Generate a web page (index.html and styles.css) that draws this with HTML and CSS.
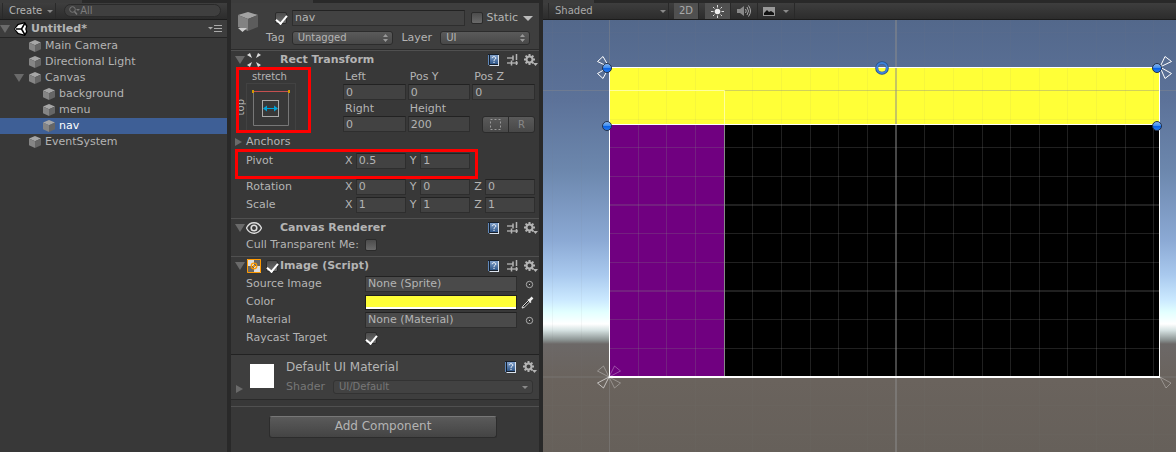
FILE: index.html
```
<!DOCTYPE html>
<html lang="en">
<head>
  <meta charset="UTF-8">
  <meta name="viewport" content="width=device-width, initial-scale=1.0">
  <title>Untitled* - Scene editor</title>
  <link rel="stylesheet" href="styles.css">
</head>
<body>
  <!-- shared icons -->
  <svg class="defs" width="0" height="0" aria-hidden="true">
    <linearGradient id="book-fill" x1="0" y1="0" x2="0" y2="1">
      <stop offset="0" stop-color="#7fa0cc"/>
      <stop offset="1" stop-color="#2f5688"/>
    </linearGradient>
    <linearGradient id="dot-fill" x1="0" y1="0" x2="0" y2="1">
      <stop offset="0" stop-color="#8db8ee"/>
      <stop offset="0.5" stop-color="#3c8cf0"/>
      <stop offset="0.55" stop-color="#0a62e6"/>
      <stop offset="1" stop-color="#2c80f0"/>
    </linearGradient>
    <symbol id="cube" viewBox="0 0 14 14">
      <path d="M7 1 13 3.5 7 6.2 1 3.5Z" fill="#a6a6a6"/>
      <path d="M1 3.5 7 6.2V13L1 10.2Z" fill="#858585"/>
      <path d="M13 3.5 7 6.2V13l6-2.8Z" fill="#666"/>
    </symbol>
    <symbol id="book" viewBox="0 0 13 13">
      <path d="M1 0h11v12H3L1 11Z" fill="#17202c"/>
      <path d="M3 1h8v9H3Z" fill="url(#book-fill)"/>
      <path d="M1.5 1v10" stroke="#5f87b8"/>
      <path d="M2.5 11.5h9.5M11.5 1v10" stroke="#dce4ee" fill="none"/>
      <path d="M5.2 4.2c0-2 3.6-2 3.6 0C8.800 5.400 7 5.300 7 6.800M7 7.800v1.200" stroke="#fff" fill="none"/>
    </symbol>
    <symbol id="preset" viewBox="0 0 11 12">
      <path d="M0 4h6M0 9h4M5 9h6" stroke="#a4a4a4" stroke-width="1.500"/>
      <path d="M6 1.500v5M4.500 6.500v5M9.500 0v6M9.500 7v4" stroke="#b4b4b4" stroke-width="1.500"/>
    </symbol>
    <symbol id="gear" viewBox="0 0 14 13">
      <circle cx="5.500" cy="5.500" r="3" fill="none" stroke="#b4b4b4" stroke-width="2"/>
      <path d="M5.500 0v2M5.500 9v2M0 5.500h2M9 5.500h2M1.600 1.600l1.500 1.500M8 8l1.400 1.400M1.600 9.400 3 8M8 3l1.400-1.400" stroke="#b4b4b4" stroke-width="2"/>
      <path d="M9 9h5l-2.500 3Z" fill="#b4b4b4"/>
    </symbol>
    <symbol id="picker" viewBox="0 0 9 9">
      <circle cx="4.500" cy="4.500" r="3.200" fill="none" stroke="#aaa"/>
      <path d="M4 4h1v1H4Z" fill="#ccc"/>
    </symbol>
    <symbol id="updown" viewBox="0 0 5 8">
      <path d="M0 3h5L2.500 0ZM0 5h5L2.500 8Z" fill="#999"/>
    </symbol>
  </svg>

  <main class="editor">
    <section class="hierarchy" aria-label="Hierarchy">
      <div class="tab-edge"></div>
      <div class="toolbar">
        <button class="create">Create <i class="caret"></i></button>
        <label class="search">
          <svg width="11" height="10" viewBox="0 0 11 10"><circle cx="3.500" cy="3.500" r="2.800" fill="none" stroke="#777"/><path d="M5.500 5.500 8 8.500" stroke="#777" stroke-width="1.500"/><path d="M7 3h4L9 5Z" fill="#777"/></svg>
          <input type="search" placeholder="All" aria-label="Search">
        </label>
      </div>
      <div class="scene-name">
        <i class="fold"></i>
        <svg width="14" height="14" viewBox="0 0 14 14"><path d="M0 7 3.500 2 11 0l2.500 4-1 3 1 3-2.500 4-7.500-2Z" fill="#000"/><path d="M1 7 4.500 3 10.500 1.500 12 4.500 11.200 7l.8 2.500-1.500 3-6-1.500Z" fill="#fff"/><path d="M2 7h5.500M7.500 7l3.500-6M7.500 7l3.500 6" stroke="#000" stroke-width="1.500"/></svg>
        <b>Untitled*</b>
        <button class="scene-menu" aria-label="Scene menu"><svg width="14" height="7" viewBox="0 0 14 7"><path d="M0 2h5L2.500 4.500Z" fill="#aaa"/><path d="M6 .5h8M6 3.500h8M6 6.500h8" stroke="#aaa"/></svg></button>
      </div>
      <ul class="tree">
        <li><svg class="cube"><use href="#cube"/></svg>Main Camera</li>
        <li><svg class="cube"><use href="#cube"/></svg>Directional Light</li>
        <li class="parent"><i class="fold"></i><svg class="cube"><use href="#cube"/></svg>Canvas</li>
        <li class="child"><svg class="cube"><use href="#cube"/></svg>background</li>
        <li class="child"><svg class="cube"><use href="#cube"/></svg>menu</li>
        <li class="child selected"><svg class="cube"><use href="#cube"/></svg>nav</li>
        <li><svg class="cube"><use href="#cube"/></svg>EventSystem</li>
      </ul>
    </section>

    <section class="inspector" aria-label="Inspector">
      <div class="tab-edge"></div>
      <header class="object">
        <svg class="object-icon" viewBox="0 0 22 24"><path d="M11 2 21 5 11 9 1 5Z" fill="#a3a3a3"/><path d="M1 5 11 9v12L1 17Z" fill="#828282"/><path d="M21 5 11 9v12l10-4Z" fill="#5c5c5c"/><path d="M1 18h9l-4.500 4Z" fill="#ccc"/></svg>
        <div class="object-fields">
          <div class="object-row">
            <input type="checkbox" checked aria-label="Active">
            <input class="field name" type="text" value="nav" aria-label="Name">
            <label class="static"><input type="checkbox"> Static</label>
            <i class="caret big"></i>
          </div>
          <div class="object-row tags">
            <label for="tag">Tag</label>
            <span class="drop tag"><select id="tag"><option>Untagged</option></select><svg><use href="#updown"/></svg></span>
            <label for="layer">Layer</label>
            <span class="drop layer"><select id="layer"><option>UI</option></select><svg><use href="#updown"/></svg></span>
          </div>
        </div>
      </header>

      <article class="component">
        <header class="bar">
          <i class="fold"></i>
          <svg class="kind" viewBox="0 0 16 16"><path d="M1 3 4 1l2 5ZM15 3l-3-2-2 5ZM1 13l3 2 2-5ZM15 13l-3 2-2-5Z" fill="#ddd"/></svg>
          <h2>Rect Transform</h2>
          <svg class="book"><use href="#book"/></svg><svg class="preset"><use href="#preset"/></svg><svg class="gear"><use href="#gear"/></svg>
        </header>
        <div class="rect">
          <div class="anchor">
            <span>stretch</span>
            <button aria-label="Anchor presets"><svg width="48" height="46" viewBox="0 0 48 46"><path d="M6.500 7.500v34h35v-34" fill="none" stroke="#777"/><path d="M7 7.500h35" stroke="#c45050"/><path d="M5 6h2v3H5ZM41 6h2v3h-2Z" fill="#d09a00"/><rect x="15.500" y="16.500" width="16" height="16" fill="none" stroke="#aaa"/><path d="M17 24.500h13" stroke="#00a2d8"/><path d="M16 24.500l4-3v6ZM31 24.500l-4-3v6Z" fill="#00a2d8"/></svg></button>
            <span class="side">top</span>
            <div class="mark"></div>
          </div>
          <label>Left<input class="field" type="text" value="0"></label>
          <label>Pos Y<input class="field" type="text" value="0"></label>
          <label>Pos Z<input class="field" type="text" value="0"></label>
          <label>Right<input class="field" type="text" value="0"></label>
          <label>Height<input class="field" type="text" value="200"></label>
          <div class="modes">
            <button aria-label="Blueprint mode"><svg width="11" height="11" viewBox="0 0 11 11"><rect x=".5" y=".5" width="10" height="10" fill="none" stroke="#999" stroke-dasharray="2 2"/></svg></button>
            <button>R</button>
          </div>
        </div>
        <div class="anchors"><i class="fold closed"></i>Anchors</div>
        <div class="vector pivot">
          <span>Pivot</span>
          <label>X<input class="field" type="text" value="0.5"></label>
          <label>Y<input class="field" type="text" value="1"></label>
          <div class="mark"></div>
        </div>
        <div class="vector">
          <span>Rotation</span>
          <label>X<input class="field" type="text" value="0"></label>
          <label>Y<input class="field" type="text" value="0"></label>
          <label>Z<input class="field" type="text" value="0"></label>
        </div>
        <div class="vector">
          <span>Scale</span>
          <label>X<input class="field" type="text" value="1"></label>
          <label>Y<input class="field" type="text" value="1"></label>
          <label>Z<input class="field" type="text" value="1"></label>
        </div>
      </article>

      <article class="component">
        <header class="bar">
          <i class="fold"></i>
          <svg class="kind" viewBox="0 0 16 16"><path d="M.5 8C4 1 12 1 15.500 8 12 15 4 15 .5 8Z" fill="none" stroke="#ddd" stroke-width="1.300"/><circle cx="8" cy="8" r="2.800" fill="none" stroke="#ddd" stroke-width="1.600"/></svg>
          <h2>Canvas Renderer</h2>
          <svg class="book"><use href="#book"/></svg><svg class="preset"><use href="#preset"/></svg><svg class="gear"><use href="#gear"/></svg>
        </header>
        <div class="prop tight"><label for="cull">Cull Transparent Me:</label><input id="cull" type="checkbox"></div>
      </article>

      <article class="component">
        <header class="bar">
          <i class="fold"></i>
          <svg class="kind" viewBox="0 0 16 16"><path d="M1 1h14v14H1Z" fill="#ddd"/><path d="M8 1h7v7H8ZM1 8h7v7H1Z" fill="#666"/><path d="M1.500 1.500h13v13h-13Z" fill="none" stroke="#f90"/><circle cx="8" cy="8" r="2.800" fill="none" stroke="#f90" stroke-width="1.300"/><path d="M7 7h2v2H7Z" fill="#f90"/></svg>
          <input type="checkbox" checked aria-label="Enable Image">
          <h2>Image (Script)</h2>
          <svg class="book"><use href="#book"/></svg><svg class="preset"><use href="#preset"/></svg><svg class="gear"><use href="#gear"/></svg>
        </header>
        <div class="prop"><label for="source">Source Image</label><input id="source" class="field object-ref" type="text" value="None (Sprite)" readonly><svg class="picker"><use href="#picker"/></svg></div>
        <div class="prop"><label for="color">Color</label><button id="color" class="swatch" aria-label="Color"></button><svg class="dropper" viewBox="0 0 13 13"><path d="M1 12 2 10 7.500 4.500l1.300 1.300L3 11.500Z" fill="#111" stroke="#ddd"/><path d="M7 3.500l3 3" stroke="#eee" stroke-width="1.500"/><path d="M8.500 4.500 11.500 1.500" stroke="#eee" stroke-width="2.500"/></svg></div>
        <div class="prop"><label for="material">Material</label><input id="material" class="field object-ref" type="text" value="None (Material)" readonly><svg class="picker"><use href="#picker"/></svg></div>
        <div class="prop"><label for="raycast">Raycast Target</label><input id="raycast" type="checkbox" checked></div>
      </article>

      <article class="material">
        <i class="fold closed"></i>
        <div class="preview"></div>
        <div class="material-info">
          <div class="material-title"><h3>Default UI Material</h3><svg class="book"><use href="#book"/></svg><svg class="gear"><use href="#gear"/></svg></div>
          <div class="shader"><label for="shader">Shader</label><span class="drop"><select id="shader" disabled><option>UI/Default</option></select><i class="caret"></i></span></div>
        </div>
      </article>

      <div class="add"><button>Add Component</button></div>
    </section>

    <section class="scene" aria-label="Scene">
      <div class="tab-edge"></div>
      <div class="toolbar">
        <button class="shading">Shaded <i class="caret"></i></button>
        <button class="on">2D</button>
        <button class="on light" aria-label="Lighting"><svg width="13" height="13" viewBox="0 0 13 13"><circle cx="6.500" cy="6.500" r="2.800" fill="#eee"/><path d="M6.500 0v2.500M6.500 10.500V13M0 6.500h2.500M10.500 6.500H13M2 2l1.500 1.500M9.500 9.500 11 11M2 11l1.500-1.500M9.500 3.500 11 2" stroke="#ddd"/></svg></button>
        <button class="audio" aria-label="Audio"><svg width="14" height="12" viewBox="0 0 14 12"><path d="M0 4h3l4-3v10L3 8H0Z" fill="#888"/><path d="M8.500 4q1.500 2 0 4M10 2q3 4 0 8M11.500.5q4 5.500 0 11" fill="none" stroke="#aaa"/></svg></button>
        <button class="effects" aria-label="Effects"><svg width="12" height="9" viewBox="0 0 12 9"><path d="M0 0h12v9H0Z" fill="#999"/><path d="M1 8V6l3-3 2 2 2-1 3 2v2Z" fill="#111"/></svg><i class="caret"></i></button>
      </div>
      <div class="view">
        <svg viewBox="0 0 633 432" preserveAspectRatio="xMinYMin slice">
          <path d="M66 47h551v310H66Z" fill="#000"/>
          <path d="M67 105h114v252H67Z" fill="#700080"/>
          <path d="M67 48h550v56H67Z" fill="#ffff37"/>
          <!-- grid -->
          <path class="grid faint" d="M9.500 0v432M38.500 0v432M0 12.500h633M0 41.500h633M0 385.500h633M0 414.500h633"/>
          <path class="grid" d="M95.500 105v252M123.500 105v252M152.500 105v252M209.500 105v252M238.500 105v252M267.500 105v252M295.500 105v252M324.500 105v252M381.500 105v252M410.500 105v252M439.500 105v252M467.500 105v252M496.500 105v252M524.500 105v252M553.500 105v252M582.500 105v252M610.500 105v252"/>
          <path class="grid" d="M67 127.500h550M67 156.500h550M67 213.500h550M67 242.500h550M67 299.500h550M67 328.500h550"/>
          <path class="grid thick" d="M67 185h550M67 271h550"/>
          <path class="grid faint" d="M95.500 0v104M123.500 0v104M152.500 0v104M209.500 0v104M238.500 0v104M267.500 0v104M295.500 0v104M324.500 0v104M381.500 0v104M410.500 0v104M439.500 0v104M467.500 0v104M496.500 0v104M524.500 0v104M553.500 0v104M582.500 0v104M610.500 0v104M67 99.500h550"/>
          <path class="grid faint" d="M95.500 358v74M152.500 358v74M209.500 358v74M267.500 358v74M324.500 358v74M381.500 358v74M439.500 358v74M496.500 358v74M553.500 358v74M610.500 358v74"/>
          <path class="axis" d="M66.500 0v432M0 70.500h633M0 357h633"/>
          <path class="axis thick" d="M353 0v432"/>
          <path d="M67 70.500h114.500V104" fill="none" stroke="#ffff9c"/>
          <path d="M181.500 105v252" stroke="#888"/>
          <!-- canvas outline -->
          <path d="M66.500 357V47.500h550V357M67 104.500h550" fill="none" stroke="#fff"/>
          <path d="M66 357h551" stroke="#fff" stroke-width="2"/>
          <!-- anchors -->
          <g fill="none" stroke="#fff">
            <path d="M66 47 54.500 41.500 60 36.500ZM66 47 54.500 53.500 60 58.500ZM617 47l11.500-5.500L622 36.500ZM617 47l11.500 6.500L622 58.500Z"/>
            <path d="M66 357l-11.500-6 6-5ZM66 357l11.500 6-6 5ZM66 357l11.500-6-6-5ZM617 357l11 6-5 5Z" opacity=".3"/>
            <path d="M66 357l-11.500 6 6 5Z" opacity=".6"/>
          </g>
          <g fill="url(#dot-fill)" stroke="#22304a">
            <circle cx="64" cy="48" r="4.500"/><circle cx="64" cy="106" r="4.500"/>
            <circle cx="614" cy="48" r="4.500"/><circle cx="614" cy="106" r="4.500"/>
          </g>
          <circle cx="339" cy="48" r="5.300" fill="none" stroke="#24508c" stroke-width="3"/>
          <circle cx="339" cy="48" r="5" fill="none" stroke="#3f83da" stroke-width="2"/>
        </svg>
      </div>
    </section>
  </main>
</body>
</html>
```
FILE: styles.css
```
* {
  box-sizing: border-box;
}
body {
  margin: 0;
  background: #292929;
  color: #b4b4b4;
  font-family: "DejaVu Sans", Verdana, sans-serif;
  font-size: 11px;
  line-height: 16px;
}
button, input, select {
  margin: 0;
  padding: 0;
  border: none;
  background: none;
  color: inherit;
  font: inherit;
}
svg {
  display: block;
  flex: none;
}
h2, h3 {
  margin: 0;
}
.defs {
  position: absolute;
}
.editor {
  display: grid;
  grid-template-columns: 227px 308px 1fr;
  column-gap: 4px;
  min-height: 100vh;
}
.hierarchy, .inspector {
  background: #383838;
}
.scene {
  display: flex;
  flex-direction: column;
}
.tab-edge {
  height: 3px;
  background: linear-gradient(90deg, #3c3c3c 82px, #292929 82px);
}
.scene .tab-edge {
  background: linear-gradient(90deg, #3c3c3c 51px, #292929 51px);
}
.toolbar {
  display: flex;
  height: 17px;
  background: linear-gradient(#3e3e3e, #2c2c2c);
  border-bottom: 1px solid #1c1c1c;
  font-size: 10px;
}
.caret {
  border: 3px solid transparent;
  border-top: 3px solid #8a8a8a;
  border-bottom: none;
}
.caret.big {
  border-width: 5px 5px 0;
  border-top-color: #bbb;
}
.fold {
  border: 5px solid transparent;
  border-top: 8px solid #6a6a6a;
  border-bottom: none;
}
.fold.closed {
  border: 4px solid transparent;
  border-left: 7px solid #6a6a6a;
  border-right: none;
}

/* hierarchy */
.create {
  display: flex;
  align-items: center;
  gap: 5px;
  margin-left: 2px;
  padding: 0 2px 0 6px;
  border-left: 1px solid #2a2a2a;
  border-right: 1px solid #2a2a2a;
}
.search {
  display: flex;
  flex: 1;
  align-items: center;
  height: 13px;
  margin: 1px 6px 0 8px;
  padding-left: 4px;
  border: 1px solid #2a2a2a;
  border-radius: 7px;
  background: #3f3f3f;
}
.search input {
  width: 100%;
  outline: none;
}
.search input::placeholder {
  color: #7c7c7c;
  opacity: 1;
}
.scene-name {
  display: flex;
  align-items: center;
  height: 18px;
  padding-right: 5px;
  background: #3d3d3d;
  border-bottom: 1px solid #242424;
}
.scene-name svg {
  margin-left: 4px;
}
.scene-name b {
  flex: 1;
  margin-left: 3px;
}
.tree {
  margin: 0;
  padding: 0;
  list-style: none;
}
.tree li {
  display: flex;
  align-items: center;
  height: 16px;
  padding-left: 28px;
}
.tree .parent {
  padding-left: 14px;
}
.tree .parent .fold {
  margin-right: 4px;
}
.tree .child {
  padding-left: 42px;
}
.tree .selected {
  background: #3e5f96;
  color: #fff;
}
.cube {
  width: 14px;
  height: 14px;
  margin-right: 3px;
}

/* form controls */
input[type="checkbox"] {
  display: grid;
  flex: none;
  justify-content: center;
  width: 12px;
  height: 12px;
  appearance: none;
  border: 1px solid #2b2b2b;
  border-radius: 2px;
  background: linear-gradient(#4c4c4c, #6a6a6a);
}
input[type="checkbox"]:checked::before {
  content: "";
  width: 5px;
  height: 9px;
  border: solid #fff;
  border-width: 0 2px 2px 0;
  transform: rotate(40deg);
}
.field {
  display: block;
  width: 100%;
  min-width: 0;
  height: 16px;
  padding: 0 2px;
  background: #424242;
  border: 1px solid #2e2e2e;
  border-top-color: #222;
}
.drop {
  display: flex;
  align-items: center;
  height: 14px;
  padding-right: 4px;
  border: 1px solid #2c2c2c;
  border-radius: 3px;
  background: linear-gradient(#5a5a5a, #484848);
  font-size: 10px;
  line-height: 12px;
}
.drop select {
  flex: 1;
  min-width: 0;
  padding-left: 5px;
  appearance: none;
}
.drop svg {
  width: 5px;
  height: 8px;
}

/* inspector */
.object {
  display: flex;
  height: 47px;
  padding: 7px 6px 0 6px;
  background: #3e3e3e;
  border-bottom: 1px solid #2b2b2b;
}
.object-icon {
  width: 22px;
  height: 24px;
}
.object-fields {
  flex: 1;
}
.object-row {
  display: flex;
  align-items: center;
  height: 16px;
}
.object-row > input[type="checkbox"] {
  margin: 0 5px 0 16px;
}
.object-row .name {
  flex: 1;
}
.static {
  display: flex;
  align-items: center;
  gap: 4px;
  margin: 0 5px 0 6px;
}
.tags {
  margin-top: 4px;
  padding-left: 7px;
}
.tag {
  flex: 8;
  margin: 0 8px 0 7px;
}
.layer {
  flex: 7;
  margin: 0 3px 0 8px;
}
.component {
  padding-bottom: 3px;
  border-top: 1px solid #505050;
}
.bar {
  display: flex;
  align-items: center;
  height: 18px;
  padding: 0 1px 0 4px;
}
.bar h2 {
  order: 1;
  flex: 1;
  font-size: 11px;
  margin-left: 18px;
}
.bar input[type="checkbox"] {
  margin-left: 4px;
}
.bar input + h2 {
  margin-left: 2px;
}
.kind {
  width: 16px;
  height: 16px;
  margin-left: 1px;
}
.book {
  order: 2;
  width: 13px;
  height: 13px;
}
.preset {
  order: 3;
  width: 11px;
  height: 12px;
  margin: 0 6px 0 7px;
}
.gear {
  order: 4;
  width: 14px;
  height: 13px;
}
.rect {
  display: grid;
  grid-template-columns: 95px repeat(3, 1fr);
  column-gap: 2px;
  padding: 0 4px 0 15px;
}
.rect label {
  height: 32px;
  line-height: 15px;
  text-indent: 2px;
}
.rect .field {
  text-indent: 0;
}
.anchor {
  position: relative;
  grid-row: span 2;
  padding-top: 1px;
  font-size: 10px;
  line-height: 13px;
}
.anchor span {
  margin-left: 6px;
}
.anchor button {
  display: block;
  border: 1px solid #424242;
  border-bottom: none;
}
.anchor .side {
  position: absolute;
  left: -18px;
  top: 30px;
  writing-mode: vertical-rl;
  transform: rotate(180deg);
}
.mark {
  position: absolute;
  border: 3px solid #f00;
}
.anchor .mark {
  inset: -2px 30px 0 -10px;
}
.modes {
  display: flex;
  align-self: end;
  height: 17px;
  margin-left: 10px;
  border: 1px solid #2c2c2c;
  border-radius: 3px;
  background: linear-gradient(#5a5a5a, #484848);
  color: #888;
  font-size: 10px;
}
.modes button {
  display: flex;
  flex: 1;
  align-items: center;
  justify-content: center;
}
.modes button + button {
  border-left: 1px solid #2c2c2c;
}
.anchors {
  display: flex;
  align-items: center;
  height: 18px;
  margin-bottom: 2px;
  padding-left: 4px;
}
.anchors .fold {
  margin-right: 4px;
}
.vector {
  display: grid;
  grid-template-columns: 95px repeat(3, 1fr);
  column-gap: 2px;
  margin-bottom: 2px;
  padding: 0 4px 0 15px;
}
.vector label {
  display: flex;
  padding-left: 2px;
}
.vector .field {
  flex: none;
  width: 50px;
  margin-left: auto;
}
.pivot {
  position: relative;
  margin-bottom: 10px;
}
.pivot .mark {
  inset: -4px 61px -10px 4px;
}
.prop {
  display: flex;
  align-items: center;
  height: 18px;
  padding: 0 5px 0 15px;
}
.prop.tight {
  height: 16px;
}
.prop label {
  flex: none;
  width: 118px;
  margin-right: 1px;
  white-space: nowrap;
}
.prop .object-ref {
  flex: 1;
  background: #4a4a4a;
}
.picker {
  width: 9px;
  height: 9px;
  margin-left: 8px;
}
.swatch {
  flex: 1;
  height: 15px;
  border: 1px solid #1e1e1e;
  background: linear-gradient(#ffff37 11px, #fff 11px);
}
.dropper {
  width: 13px;
  height: 13px;
  margin-left: 4px;
}
.material {
  display: flex;
  height: 46px;
  margin-top: 4px;
  padding: 4px 2px 0 5px;
  background: #3e3e3e;
  border-top: 1px solid #222;
  border-bottom: 1px solid #2a2a2a;
}
.material > .fold {
  align-self: end;
  margin-bottom: 6px;
}
.preview {
  width: 24px;
  height: 24px;
  margin: 5px 12px 0 7px;
  background: #fff;
}
.material-info {
  flex: 1;
}
.material-title {
  display: flex;
  align-items: center;
}
.material-title h3 {
  flex: 1;
  font-size: 12px;
  font-weight: normal;
}
.material-title .gear {
  margin-left: 6px;
}
.shader {
  display: flex;
  align-items: center;
  gap: 8px;
  margin: 4px 4px 0 0;
  color: #777;
}
.shader .drop {
  flex: 1;
  background: #424242;
  border-color: #333;
}
.shader select {
  opacity: 1;
}
.add {
  display: flex;
  justify-content: center;
  margin-top: 6px;
  padding-top: 9px;
  border-top: 1px solid #505050;
}
.add button {
  width: 74%;
  height: 22px;
  margin-right: 4px;
  padding-bottom: 3px;
  border: 1px solid #2c2c2c;
  border-top-color: #777;
  border-radius: 3px;
  background: linear-gradient(#5a5a5a, #444);
  font-size: 12px;
}

/* scene */
.scene .toolbar {
  color: #aaa;
}
.scene .toolbar button {
  display: flex;
  align-items: center;
  justify-content: center;
  border-right: 1px solid #292929;
}
.scene .toolbar .shading {
  justify-content: space-between;
  width: 121px;
  margin-left: 5px;
  margin-right: 5px;
  padding: 0 2px 0 6px;
  border-left: 1px solid #292929;
}
.scene .toolbar .on {
  width: 25px;
  margin-right: 6px;
  background: #505050;
}
.scene .toolbar .light {
  width: 26px;
  margin-right: 0;
}
.audio {
  width: 27px;
}
.scene .toolbar .effects {
  gap: 8px;
  width: 37px;
}
.view {
  flex: 1;
  overflow: hidden;
  background: linear-gradient(#53688b 0, #5c7299 80px, #6c87ad 150px, #8ba9d4 220px, #a9c9ee 255px, #cbe9ff 280px, #e2ffff 292px, #fff 304px, #d8e4e4 310px, #8b9392 320px, #6c6867 324px, #6a635d 360px, #66605a 432px);
}
.view svg {
  width: 100%;
  height: 432px;
}
.grid {
  stroke: rgba(128, 128, 128, 0.25);
}
.grid.faint {
  stroke: rgba(128, 128, 128, 0.07);
}
.axis {
  stroke: rgba(140, 140, 140, 0.4);
}
.thick {
  stroke-width: 2;
}
.axis.thick {
  stroke: rgba(140, 140, 140, 0.5);
}
```
